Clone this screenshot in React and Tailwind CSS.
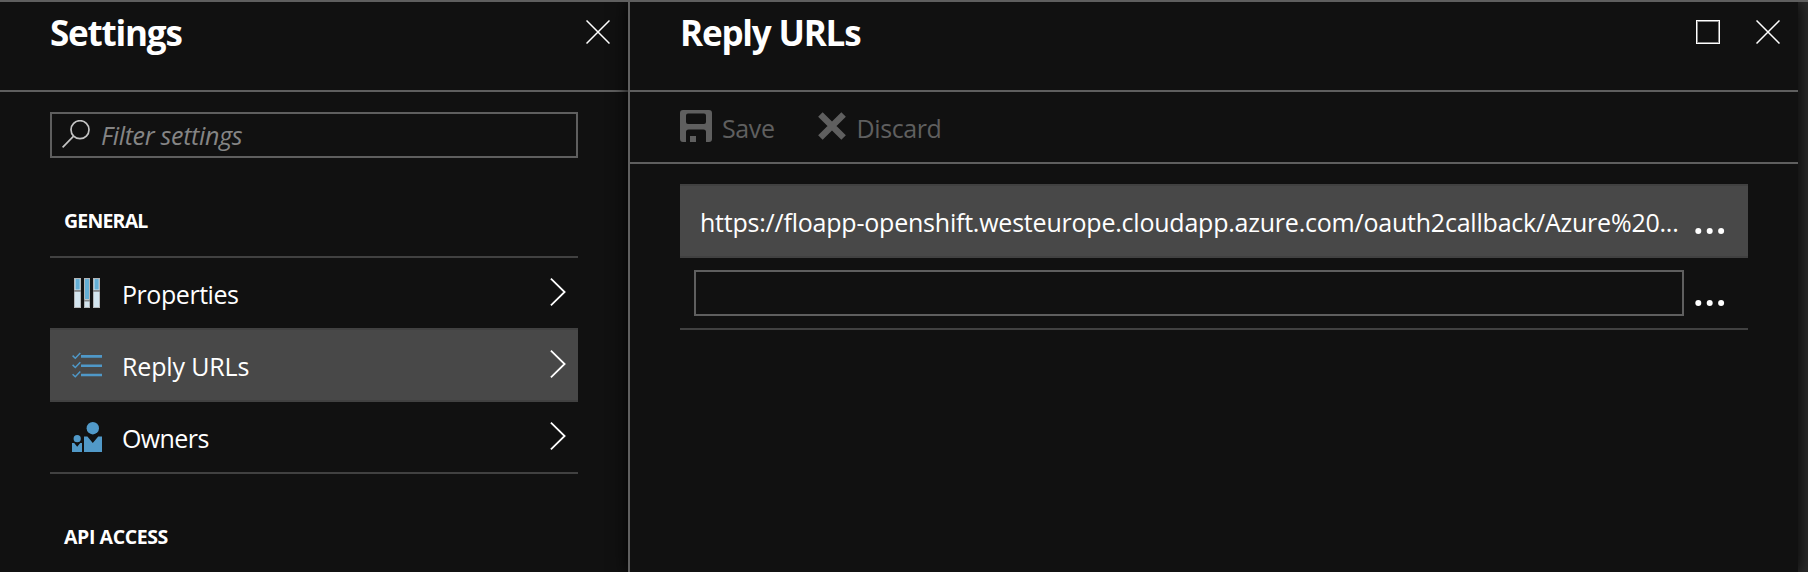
import React from 'react';

function CloseIcon() {
  return (
    <svg width="24" height="24" viewBox="0 0 24 24" fill="none" stroke="#fff" strokeWidth="1.5">
      <path d="M0.5 0.5 23.5 23.5M23.5 0.5 0.5 23.5" />
    </svg>
  );
}

function MaximizeIcon() {
  return (
    <svg width="24" height="24" viewBox="0 0 24 24" fill="none">
      <rect x="1.5" y="1.5" width="21" height="21" stroke="#8a8a8a" />
      <rect x="0.5" y="0.5" width="23" height="23" stroke="#fff" />
    </svg>
  );
}

function SearchIcon() {
  return (
    <svg width="28" height="28" viewBox="0 0 28 28" fill="none" stroke="#c4c4c4" strokeWidth="1.7">
      <circle cx="18" cy="9.7" r="9" />
      <path d="M11.6 16.2 0.6 27.4" />
    </svg>
  );
}

function PropertiesIcon() {
  return (
    <svg width="30" height="30" viewBox="0 0 30 30">
      <g fill="#b4b6b8">
        <rect x="2" width="7" height="30" />
        <rect x="12" width="6" height="30" />
        <rect x="21" width="7" height="30" />
      </g>
      <g fill="#d3e5ef">
        <rect x="3" y="1" width="5" height="28" />
        <rect x="13" y="1" width="4" height="28" />
        <rect x="22" y="1" width="5" height="28" />
      </g>
      <g fill="#64afd6">
        <rect x="3.5" y="1" width="4.2" height="10.5" />
        <rect x="13" y="1" width="4" height="20" />
        <rect x="22.5" y="1" width="4.2" height="10.5" />
      </g>
      <g fill="#858789">
        <rect x="2" y="12" width="7" height="1.8" />
        <rect x="12" y="21.7" width="6" height="1.8" />
        <rect x="21" y="12" width="7" height="1.8" />
      </g>
    </svg>
  );
}

function ChecklistIcon() {
  return (
    <svg width="30" height="26" viewBox="0 0 30 26" fill="none" stroke="#4f98c8">
      <path strokeWidth="2.6" d="M9 4.4H30M9 13.7H30M9 23H30" />
      <path strokeWidth="1.5" d="M0.6 3.6 3.3 6.2 8.3 1M0.6 12.9 3.3 15.5 8.3 10.3M0.6 22.2 3.3 24.8 8.3 19.6" />
    </svg>
  );
}

function OwnersIcon() {
  return (
    <svg width="30" height="30" viewBox="0 0 30 30" fill="#5199c8">
      <circle cx="20.8" cy="6.2" r="6.2" />
      <circle cx="5.2" cy="16.7" r="3.6" />
      <path d="M12 14.5H15.4L20.8 21 26.2 14.5H30V30H12Z" />
      <path d="M0 21H2.2L5.2 24.8 8.2 21H10V30H0Z" />
    </svg>
  );
}

function Chevron() {
  return (
    <svg width="16" height="28" viewBox="0 0 16 28" fill="none" stroke="#fff" strokeWidth="1.8">
      <path d="M0.9 0.7 14.6 14 0.9 27.3" />
    </svg>
  );
}

function SaveIcon() {
  return (
    <svg width="32" height="32" viewBox="0 0 32 32" fill="#5f5f5f">
      <path
        fillRule="evenodd"
        d="M3 0H29Q32 0 32 3V29Q32 32 29 32H26V22Q26 19.5 23.5 19.5H8.5Q6 19.5 6 22V32H3Q0 32 0 29V3Q0 0 3 0ZM8 3.5Q6 3.5 6 5.5V12Q6 14 8 14H24Q26 14 26 12V5.5Q26 3.5 24 3.5Z"
      />
      <rect x="10" y="26" width="6" height="6" />
    </svg>
  );
}

function DiscardIcon() {
  return (
    <svg width="28" height="28" viewBox="0 0 28 28" fill="none" stroke="#5f5f5f" strokeWidth="6.4">
      <path d="M2.4 2.4 25.6 25.6M25.6 2.4 2.4 25.6" />
    </svg>
  );
}

function Dots() {
  return (
    <svg width="30" height="6" viewBox="0 0 30 6" fill="#fff">
      <circle cx="3.3" cy="3" r="3" />
      <circle cx="14.7" cy="3" r="3" />
      <circle cx="26.1" cy="3" r="3" />
    </svg>
  );
}

const items = [
  { label: 'Properties', Icon: PropertiesIcon, tracking: 'tracking-[-0.45px]' },
  { label: 'Reply URLs', Icon: ChecklistIcon, tracking: 'tracking-[-0.15px]', selected: true },
  { label: 'Owners', Icon: OwnersIcon, tracking: 'tracking-[-0.6px]' },
];

function SettingsPanel() {
  return (
    <section className="flex h-full w-[628px] shrink-0 flex-col">
      <header className="flex h-[90px] items-start justify-between border-b-2 border-[#5f5f5f] pr-[18px] pl-[50px]">
        <h1 className="text-[35px] leading-[62px] font-bold tracking-[-1.2px]">Settings</h1>
        <button className="mt-[18px]"><CloseIcon /></button>
      </header>
      <div className="px-[50px] pt-5">
        <label className="flex h-[46px] items-start border-2 border-[#5f5f5f] pl-[10px]">
          <span className="mt-[6px]"><SearchIcon /></span>
          <span className="ml-[11px] text-[25px] leading-[42px] tracking-[-0.3px] text-[#858585] italic">Filter settings</span>
        </label>
        <h2 className="mt-[48px] h-[50px] pl-[14px] text-[19.5px] leading-[30px] font-bold tracking-[-0.8px]">GENERAL</h2>
        <ul className="border-b-2 border-[#414141]">
          {items.map(({ label, Icon, tracking, selected }) => (
            <li
              key={label}
              className={
                'flex h-[72px] items-center border-t-2 border-[#414141] pr-[12px] pl-[22px] ' +
                (selected ? 'bg-[#484848]' : '')
              }
            >
              <span className="flex w-[30px] justify-center"><Icon /></span>
              <span className={'ml-5 grow pt-px text-[25px] leading-[60px] ' + tracking}>{label}</span>
              <span className="-mt-[2px]"><Chevron /></span>
            </li>
          ))}
        </ul>
        <h2 className="mt-[48px] pl-[14px] text-[19.5px] leading-[30px] font-bold tracking-[-0.4px]">API ACCESS</h2>
      </div>
    </section>
  );
}

function ReplyUrlsPanel() {
  return (
    <section className="z-10 flex h-full w-[1170px] shrink-0 flex-col border-l-2 border-[#5f5f5f] bg-[#111] shadow-[0_0_16px_#000]">
      <header className="flex h-[90px] items-start border-b-2 border-[#5f5f5f] pr-[18px] pl-[50px]">
        <h1 className="grow text-[35px] leading-[62px] font-bold tracking-[-1.2px]">Reply URLs</h1>
        <button className="mt-[18px] mr-9"><MaximizeIcon /></button>
        <button className="mt-[18px]"><CloseIcon /></button>
      </header>
      <div className="flex h-[72px] items-start border-b-2 border-[#5f5f5f] pl-[50px] text-[25px] text-[#5f5f5f]">
        <button className="flex items-start">
          <span className="mt-[18px]"><SaveIcon /></span>
          <span className="ml-[10px] leading-[73px] tracking-[-0.4px]">Save</span>
        </button>
        <button className="ml-[43px] flex items-start">
          <span className="mt-5"><DiscardIcon /></span>
          <span className="ml-[11px] leading-[73px] tracking-[-0.4px]">Discard</span>
        </button>
      </div>
      <div className="pt-5 pr-[50px] pl-[50px]">
        <div className="flex h-[74px] items-start border-y-2 border-[#414141] bg-[#484848] pl-5">
          <span className="w-[995px] truncate text-[25px] leading-[72px] tracking-[-0.22px]">
            https://floapp-openshift.westeurope.cloudapp.azure.com/oauth2callback/Azure%20...
          </span>
          <button className="mt-[42px]"><Dots /></button>
        </div>
        <div className="flex h-[72px] items-start border-b-2 border-[#414141] pt-3 pl-[14px]">
          <input className="h-[46px] w-[990px] border-2 border-[#5f5f5f] bg-transparent" />
          <button className="mt-[30px] ml-[11px]"><Dots /></button>
        </div>
      </div>
    </section>
  );
}

export default function App() {
  return (
    <div
      className="flex h-[572px] w-[1808px] overflow-hidden border-t-2 border-[#5f5f5f] bg-[#111] text-white"
      style={{ fontFamily: '"Open Sans", "Noto Sans", sans-serif' }}
    >
      <SettingsPanel />
      <ReplyUrlsPanel />
      <div className="h-full grow bg-[#2b2b2b]" />
    </div>
  );
}
